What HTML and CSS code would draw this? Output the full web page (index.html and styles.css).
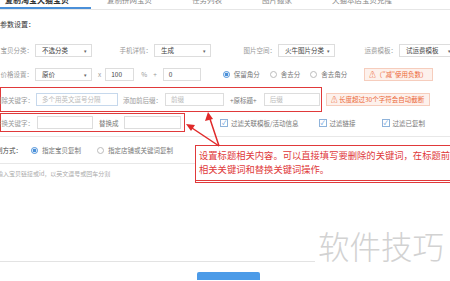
FILE: index.html
```html
<!DOCTYPE html>
<html lang="zh-CN">
<head>
<meta charset="UTF-8">
<title>复制淘宝天猫宝贝</title>
<link rel="stylesheet" href="styles.css">
</head>
<body>
<div class="page">
    <div class="tabs">
        <div class="tab active">复制淘宝天猫宝贝</div>
        <div class="tab tab-2">复制拼网宝贝</div>
        <div class="tab">任务列表</div>
        <div class="tab">图片搬家</div>
        <div class="tab">天猫本店宝贝克隆</div>
    </div>

    <div class="section-title">参数设置：</div>

    <div class="row row-1">
        <span class="label">宝贝分类：</span>
        <div class="select">不选分类<span class="caret">▾</span></div>
        <span class="label label-2">手机详情：</span>
        <div class="select">生成<span class="caret">▾</span></div>
        <span class="label label-3">图片空间：</span>
        <div class="select">火牛图片分类<span class="caret">▾</span></div>
        <span class="label label-4">运费模板：</span>
        <div class="select">试运费模板<span class="caret">▾</span></div>
    </div>

    <div class="row row-2">
        <span class="label">价格设置：</span>
        <div class="select">原价<span class="caret">▾</span></div>
        <span class="op op-x">x</span>
        <div class="input w-29">100</div>
        <span class="op op-pct">%</span>
        <span class="op op-plus">+</span>
        <div class="input w-38">0</div>
        <label class="radio checked r-1">保留角分</label>
        <label class="radio r-2">舍去分</label>
        <label class="radio r-3">舍去角分</label>
        <div class="warn warn-price">⚠（"减"使用负数）</div>
    </div>

    <div class="row row-3">
        <div class="hl hl-title">
            <span class="label">删除关键字：</span>
            <div class="input w-82 ph">多个用英文逗号分隔</div>
            <span class="plain p-affix">添加前后缀：</span>
            <div class="input w-59 ph">前缀</div>
            <span class="plain p-orig">+原标题+</span>
            <div class="input w-56 ph">后缀</div>
        </div>
        <div class="warn warn-len">⚠ 长度超过30个字符会自动截断</div>
    </div>

    <div class="row row-4">
        <div class="hl hl-replace">
            <span class="label">替换关键字：</span>
            <div class="input w-56"></div>
            <span class="plain p-to">替换成</span>
            <div class="input w-57"></div>
        </div>
        <label class="check c-1">过滤关联模板/活动信息</label>
        <label class="check c-2">过滤链接</label>
        <label class="check c-3">过滤已复制</label>
    </div>

    <div class="divider"></div>

    <div class="row row-mode">
        <span class="label label-mode">复制方式：</span>
        <label class="radio checked m-1">指定宝贝复制</label>
        <label class="radio m-2">指定店铺或关键词复制</label>
    </div>
    <div class="divider short"></div>
    <div class="hint">请输入宝贝链接或id，以英文逗号或回车分割</div>

    <div class="bottom-line"></div>
    <div class="submit"></div>

    <div class="callout">设置标题相关内容。可以直接填写要删除的关键词，在标题前后添加<br>相关关键词和替换关键词操作。</div>

    <svg class="arrows" width="450" height="281" viewBox="0 0 450 281">
        <g fill="#e02a2a" stroke="#e02a2a" stroke-width="1.5">
            <line x1="219" y1="146" x2="210" y2="119"/>
            <polygon points="208,112 205,121 213,119" stroke="none"/>
            <line x1="219" y1="146" x2="192" y2="128"/>
            <polygon points="186,124 191,131 195,125" stroke="none"/>
        </g>
    </svg>

    <div class="watermark">软件技巧</div>
</div>
</body>
</html>
```

FILE: styles.css
```css
body {
    margin: 0;
    padding: 0;
    background: #fff;
    font-family: "Noto Sans CJK SC", "Liberation Sans", sans-serif;
    font-size: 6.5px;
    color: #444;
}
.page {
    position: relative;
    width: 450px;
    height: 281px;
    overflow: hidden;
}

/* tabs */
.tabs {
    display: flex;
    margin-top: -7px;
    height: 16px;
    border-bottom: 1px solid #e6e6e6;
    white-space: nowrap;
}
.tab {
    flex-shrink: 0;
    margin-left: 40px;
    line-height: 14px;
    font-size: 7.5px;
    color: #888;
}
.tab.active {
    margin-left: 0;
    padding: 0 22px 0 5px;
    font-size: 8px;
    font-weight: bold;
    color: #333;
    border-bottom: 2px solid #4a90d9;
}
.tab.tab-2 { margin-left: 16px; }

.section-title {
    margin-top: 8px;
    line-height: 12px;
    font-size: 7px;
    color: #333;
}

/* form rows */
.row {
    display: flex;
    align-items: center;
    white-space: nowrap;
}
.row-1 { margin-top: 8px; height: 24px; }
.row-2 { height: 24px; }
.row-3 { margin-top: 1px; height: 25px; }
.row-4 { margin-top: 1px; height: 19px; }
.label {
    display: flex;
    justify-content: flex-end;
    flex-shrink: 0;
    width: 33px;
    color: #999;
}
.label-2 { width: 36px; margin-left: 24px; }
.label-3 { width: 36px; margin-left: 29px; }
.label-4 { width: 36px; margin-left: 26px; }
.select {
    display: flex;
    align-items: center;
    justify-content: space-between;
    flex-shrink: 0;
    box-sizing: border-box;
    width: 57px;
    height: 13px;
    margin-left: 2px;
    padding: 0 4px 0 6px;
    border: 1px solid #ddd;
    color: #444;
}
.caret {
    font-size: 5px;
    color: #666;
}
.op { color: #999; }
.op-x { margin-left: 6px; }
.op-pct { margin-left: 7px; }
.op-plus { margin-left: 6px; }
.input {
    flex-shrink: 0;
    box-sizing: border-box;
    height: 13px;
    line-height: 11px;
    padding: 0 5px;
    border: 1px solid #ddd;
    color: #444;
}
.input.ph { color: #bbb; }
.w-29 { width: 29px; margin-left: 4px; }
.w-38 { width: 38px; margin-left: 6px; }
.w-82 { width: 82px; margin-left: 2px; border-color: #c6d8ec; }
.w-59 { width: 59px; margin-left: 3px; }
.w-56 { width: 56px; }
.w-57 { width: 57px; margin-left: 5px; }
.hl-title .w-56 { margin-left: 7px; }
.hl-replace .w-56 { margin-left: 3px; }

.radio {
    display: inline-flex;
    align-items: center;
    color: #777;
}
.radio::before {
    content: "";
    width: 5px;
    height: 5px;
    margin-right: 4px;
    border: 1px solid #bbb;
    border-radius: 50%;
}
.radio.checked::before {
    border-color: #4a90d9;
    background: radial-gradient(circle, #4a90d9 45%, #fff 60%);
}
.r-1 { margin-left: 22px; }
.r-2 { margin-left: 10px; }
.r-3 { margin-left: 10px; }

.warn {
    box-sizing: border-box;
    height: 13px;
    line-height: 11px;
    padding: 0 4px;
    border: 1px solid #f6cdbd;
    background: #fdf1ec;
    color: #ec6a3a;
}
.warn-price { margin-left: 17px; }
.warn-len { margin-left: 4px; width: 104px; }

.hl {
    display: flex;
    align-items: center;
    box-sizing: border-box;
    height: 100%;
    border: 1.5px solid #e0393a;
    border-left-width: 1px;
}
.hl-title { width: 322px; }
.hl-replace { width: 185px; }
.plain { color: #999; }
.p-affix { margin-left: 5px; }
.p-orig { margin-left: 6px; color: #777; }
.p-to { margin-left: 6px; color: #777; }

.check {
    display: inline-flex;
    align-items: center;
    color: #777;
}
.check::before {
    content: "✓";
    display: inline-block;
    width: 6px;
    height: 6px;
    line-height: 6px;
    margin-right: 3px;
    border: 1px solid #8fb3da;
    color: #4a90d9;
    font-size: 6px;
    text-align: center;
}
.c-1 { margin-left: 35px; }
.c-2 { margin-left: 20px; }
.c-3 { margin-left: 26px; }

/* copy mode */
.divider {
    height: 1px;
    background: #e8e8e8;
    margin-top: 4px;
}
.divider.short { width: 200px; margin-top: 0; }
.row-mode { height: 26px; }
.label-mode { width: 22px; color: #444; }
.m-1 { margin-left: 9px; }
.m-2 { margin-left: 16px; }
.hint {
    margin-left: -9px;
    margin-top: 4px;
    line-height: 12px;
    font-size: 6px;
    color: #aaa;
}
.bottom-line {
    width: 315px;
    height: 1px;
    background: #e3e3e3;
    margin-top: 81px;
}
.submit {
    width: 63px;
    height: 8px;
    margin: 10px 0 0 197px;
    background: #4c9be8;
    border-radius: 2px 2px 0 0;
}

/* annotation overlay */
.callout {
    position: absolute;
    left: 195px;
    top: 145px;
    width: 300px;
    height: 30px;
    padding: 2px 3px;
    border: 1px solid #e0393a;
    border-bottom: 3px double #e0393a;
    background: #fff;
    color: #e0393a;
    font-size: 9.3px;
    line-height: 14px;
    white-space: nowrap;
    overflow: hidden;
}
.arrows {
    position: absolute;
    left: 0;
    top: 0;
    pointer-events: none;
}
.watermark {
    position: absolute;
    left: 318px;
    top: 222px;
    font-size: 31.5px;
    color: #d2d2d2;
    font-weight: 300;
    white-space: nowrap;
}
```
